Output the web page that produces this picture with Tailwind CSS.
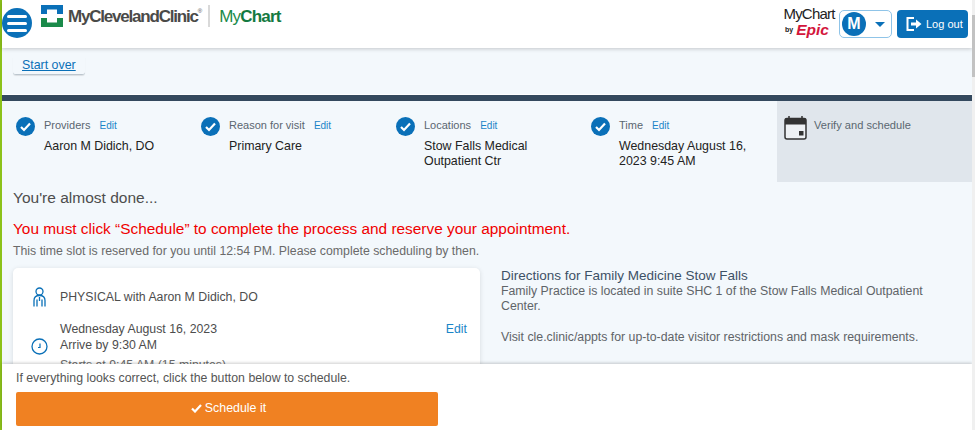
<!DOCTYPE html>
<html lang="en">
<head>
    <meta charset="UTF-8">
    <title>MyChart | Schedule</title>
    <script src="https://cdn.jsdelivr.net/npm/@tailwindcss/browser@4"></script>
</head>
<body class="bg-white">
<div class="relative flex h-[430px] w-[975px] overflow-hidden font-['Liberation_Sans',Arial,sans-serif] text-[#4d4d4d]">
    <!-- green edge -->
    <div class="w-[2px] shrink-0 bg-[#8cc21a]"></div>

    <div class="flex w-[970px] shrink-0 flex-col bg-[#f3f8fc]">
        <!-- Header -->
        <header class="relative z-10 flex h-[48px] shrink-0 items-start justify-between bg-white pr-[4px] shadow-[0_1px_4px_rgba(0,0,0,0.2)]">
            <div class="flex items-start">
                <button class="mt-[8px] flex h-[30px] w-[30px] flex-col items-center justify-center gap-[4px] rounded-full bg-[#0a70b8]">
                    <span class="h-[3px] w-[20px] rounded-full bg-white"></span>
                    <span class="h-[3px] w-[20px] rounded-full bg-white"></span>
                    <span class="h-[3px] w-[20px] rounded-full bg-white"></span>
                </button>
                <svg class="ml-[9px] mt-[5px]" width="22" height="22" viewBox="0 0 22 22">
                    <path d="M0 0h22v9h-6V4.500H6V9H0z" fill="#0a70b8"/>
                    <path d="M0 13h6v4.500h10V13h6v9H0z" fill="#1a8a4a"/>
                </svg>
                <span class="ml-[5px] mt-[7px] text-[17px] leading-[20px] font-bold tracking-[-1.2px] text-[#4a4a48]">MyClevelandClinic</span>
                <span class="mt-[8px] text-[6px] leading-[6px] text-[#4a4a48]">®</span>
                <span class="ml-[6px] mt-[5px] h-[22px] w-[2px] bg-[#d9d9d9]"></span>
                <span class="ml-[9px] mt-[7px] text-[17px] leading-[20px] tracking-[-0.8px] text-[#1a8a4a]">My<span class="font-bold text-[#147a41]">Chart</span></span>
            </div>
            <div class="flex items-start">
                <div class="mt-[7px] flex w-[52px] flex-col items-center">
                    <span class="text-[15px] leading-[14px] tracking-[-0.8px] text-[#222]">MyChart</span>
                    <span class="mt-[3px] flex items-center gap-[3px] pr-[4px] leading-[12px]">
                        <span class="text-[7px] font-bold text-[#222]">by</span>
                        <span class="text-[15.500px] font-black italic text-[#d3163c]">Epic</span>
                    </span>
                </div>
                <button class="ml-[4px] mt-[10px] flex h-[28px] w-[53px] items-center rounded-[5px] border border-[#8fc4e8] bg-white pl-[2px]">
                    <span class="flex h-[24px] w-[24px] items-center justify-center rounded-full bg-[#0a70b8] text-[16px] font-bold text-white">M</span>
                    <span class="ml-[9px] h-0 w-0 border-x-[5px] border-t-[5px] border-x-transparent border-t-[#0a70b8]"></span>
                </button>
                <button class="ml-[5px] mt-[10px] flex h-[28px] w-[71px] items-center rounded-[4px] bg-[#0a70b8] pl-[9px] text-[11px] text-white">
                    <svg width="16" height="14" viewBox="0 0 16 14" fill="none">
                        <path d="M8 1H1.500v12H8" stroke="#fff" stroke-width="2"/>
                        <path d="M5 5.500h5V2.500l5.500 4.500L10 11.500V8.500H5z" fill="#fff"/>
                    </svg>
                    <span class="ml-[4px]">Log out</span>
                </button>
            </div>
        </header>

        <!-- Start over -->
        <div class="flex h-[47px] shrink-0 items-start border-b border-white pl-[11px] pt-[9px]">
            <a href="#" class="rounded-b-[3px] border-b border-[#bcc6ce] px-[9px] pb-[1px] text-[12.400px] leading-[16px] text-[#0a70b8] underline shadow-[0_1px_1px_rgba(0,0,0,0.1)]">Start over</a>
        </div>

        <!-- Steps -->
        <div class="h-[6px] shrink-0 bg-[#34495e]"></div>
        <div class="flex h-[81px] shrink-0 text-[12.400px]">
            <div class="flex w-[185px] pl-[14px] pt-[16px]">
                <svg class="mr-[9px] shrink-0" width="19" height="19" viewBox="0 0 19 19"><circle cx="9.500" cy="9.500" r="9.500" fill="#0a70b8"/><path d="M5 10l3 3 6-6.500" fill="none" stroke="#fff" stroke-width="2.200"/></svg>
                <div class="-mt-[1px]">
                    <div class="text-[11px] leading-[19px] text-[#5a6670]">Providers <a href="#" class="ml-[6px] text-[10px] text-[#1a85c8]">Edit</a></div>
                    <div class="mt-[3px] leading-[17px] text-[#222]">Aaron M Didich, DO</div>
                </div>
            </div>
            <div class="flex w-[195px] pl-[14px] pt-[16px]">
                <svg class="mr-[9px] shrink-0" width="19" height="19" viewBox="0 0 19 19"><circle cx="9.500" cy="9.500" r="9.500" fill="#0a70b8"/><path d="M5 10l3 3 6-6.500" fill="none" stroke="#fff" stroke-width="2.200"/></svg>
                <div class="-mt-[1px]">
                    <div class="text-[11px] leading-[19px] text-[#5a6670]">Reason for visit <a href="#" class="ml-[6px] text-[10px] text-[#1a85c8]">Edit</a></div>
                    <div class="mt-[3px] leading-[17px] text-[#222]">Primary Care</div>
                </div>
            </div>
            <div class="flex w-[195px] pl-[14px] pt-[16px]">
                <svg class="mr-[9px] shrink-0" width="19" height="19" viewBox="0 0 19 19"><circle cx="9.500" cy="9.500" r="9.500" fill="#0a70b8"/><path d="M5 10l3 3 6-6.500" fill="none" stroke="#fff" stroke-width="2.200"/></svg>
                <div class="-mt-[1px]">
                    <div class="text-[11px] leading-[19px] text-[#5a6670]">Locations <a href="#" class="ml-[6px] text-[10px] text-[#1a85c8]">Edit</a></div>
                    <div class="mt-[4px] w-[125px] leading-[15px] text-[#222]">Stow Falls Medical Outpatient Ctr</div>
                </div>
            </div>
            <div class="flex w-[200px] pl-[14px] pt-[16px]">
                <svg class="mr-[9px] shrink-0" width="19" height="19" viewBox="0 0 19 19"><circle cx="9.500" cy="9.500" r="9.500" fill="#0a70b8"/><path d="M5 10l3 3 6-6.500" fill="none" stroke="#fff" stroke-width="2.200"/></svg>
                <div class="-mt-[1px]">
                    <div class="text-[11px] leading-[19px] text-[#5a6670]">Time <a href="#" class="ml-[6px] text-[10px] text-[#1a85c8]">Edit</a></div>
                    <div class="mt-[4px] w-[145px] leading-[15px] text-[#222]">Wednesday August 16, 2023 9:45 AM</div>
                </div>
            </div>
            <div class="flex flex-1 bg-[#e0e6ec] pl-[7px] pt-[15px]">
                <svg class="mr-[7px] shrink-0" width="23" height="24" viewBox="0 0 23 24">
                    <path d="M5 0v3M18 0v3" stroke="#333" stroke-width="1.500"/>
                    <rect x="1" y="2.500" width="21" height="20.500" rx="2" fill="#eef1f4" stroke="#333" stroke-width="1.500"/>
                    <rect x="1" y="2.500" width="21" height="6" fill="#333"/>
                    <rect x="15" y="15" width="4.500" height="4.500" fill="#333"/>
                </svg>
                <span class="text-[11.100px] leading-[19px] text-[#5a6670]">Verify and schedule</span>
            </div>
        </div>

        <!-- Main -->
        <main class="flex-1 pl-[11px]">
            <h1 class="mt-[6px] text-[15.500px] leading-[20px] text-[#4d4d4d]">You're almost done...</h1>
            <p class="mt-[11px] text-[15.400px] leading-[20px] text-[#f00000]">You must click “Schedule” to complete the process and reserve your appointment.</p>
            <p class="mt-[4px] text-[12.300px] leading-[16px] text-[#6a6a6a]">This time slot is reserved for you until 12:54 PM. Please complete scheduling by then.</p>
            <div class="mt-[9px] flex items-start">
                <section class="h-[120px] w-[467px] shrink-0 rounded-[5px] bg-white pl-[18px] pr-[13px] pt-[18px] shadow-[0_1px_5px_rgba(0,0,0,0.12)]">
                    <div class="flex items-start">
                        <svg class="mt-[1px] w-[17px] shrink-0" width="14" height="20" viewBox="0 0 14 20" fill="none" stroke="#0a70b8" stroke-width="1.300">
                            <circle cx="7" cy="4.500" r="3.500"/>
                            <path d="M1.500 19.500v-6c0-3 2-5 5.500-5s5.500 2 5.500 5v6M4.500 19.500v-7M9.500 19.500v-7M7 10v4"/>
                        </svg>
                        <span class="ml-[12px] mt-[3px] text-[12.300px] leading-[16px]">PHYSICAL with Aaron M Didich, DO</span>
                    </div>
                    <div class="mt-[15px] flex items-start">
                        <svg class="mt-[16px] w-[17px] shrink-0" width="17" height="17" viewBox="0 0 17 17" fill="none" stroke="#0a70b8">
                            <circle cx="8.500" cy="8.500" r="7.500" stroke-width="1.300"/>
                            <path d="M9 5.500v4H7" stroke-width="1.200"/>
                        </svg>
                        <div class="ml-[12px] flex-1 text-[12.300px] leading-[15.500px]">
                            <div>Wednesday August 16, 2023</div>
                            <div>Arrive by 9:30 AM</div>
                            <div class="mt-[5px] text-[#6a6a6a]">Starts at 9:45 AM (15 minutes)</div>
                        </div>
                        <a href="#" class="text-[12.300px] leading-[15.500px] text-[#1a85c8]">Edit</a>
                    </div>
                </section>
                <section class="ml-[21px] w-[450px] text-[12.300px] leading-[15px] text-[#5f6468]">
                    <h2 class="text-[13.500px] leading-[16px] text-[#3d5166]">Directions for Family Medicine Stow Falls</h2>
                    <p>Family Practice is located in suite SHC 1 of the Stow Falls Medical Outpatient Center.</p>
                    <p class="mt-[16px]">Visit cle.clinic/appts for up-to-date visitor restrictions and mask requirements.</p>
                </section>
            </div>
        </main>
    </div>

    <!-- scrollbar -->
    <div class="z-30 flex-1 bg-[#f0f0f0]">
        <div class="mt-[15px] h-[62px] bg-[#c2c2c2]"></div>
    </div>

    <!-- Sticky footer over the content -->
    <div class="absolute bottom-0 left-[2px] z-20 h-[66px] w-[970px] bg-white pl-[14px] pt-[6px] shadow-[0_-1px_3px_rgba(0,0,0,0.2)]">
        <p class="text-[12.300px] leading-[16px] text-[#555]">If everything looks correct, click the button below to schedule.</p>
        <button class="mt-[6px] flex h-[34px] w-[422px] items-center justify-center gap-[3px] rounded-[2px] bg-[#f08122] pb-[1px] pl-[3px] text-[12.400px] text-white">
            <svg width="11" height="9" viewBox="0 0 11 9"><path d="M1 4.500l3 3 6-6.500" fill="none" stroke="#fff" stroke-width="2.200"/></svg>
            Schedule it
        </button>
    </div>
</div>
</body>
</html>
